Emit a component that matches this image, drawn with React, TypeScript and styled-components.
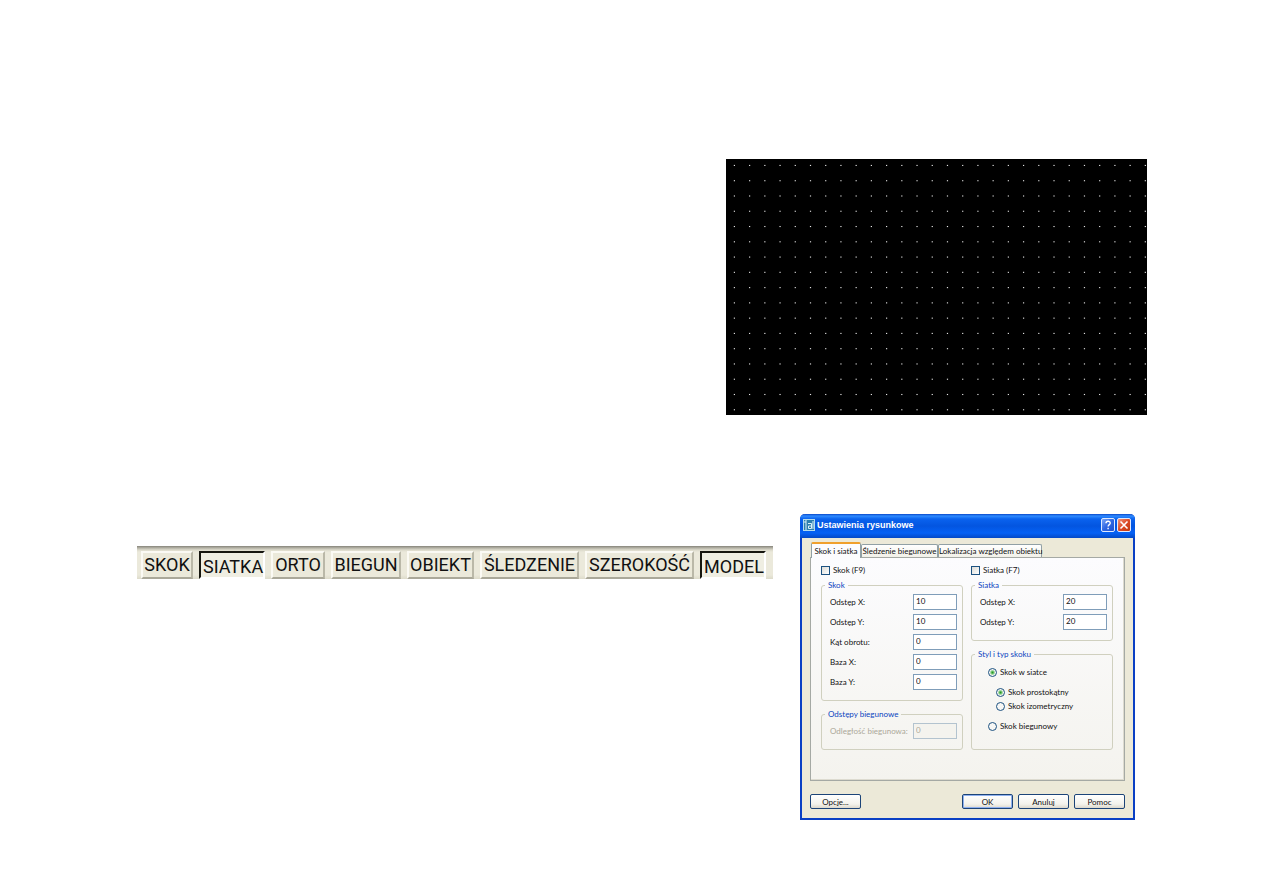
import React from 'react';
import styled, { createGlobalStyle, css } from 'styled-components';

const GlobalStyle = createGlobalStyle`
  *, *::before, *::after { box-sizing: border-box; }
  body { margin: 0; background: #fff; }
  button, input { font: inherit; color: inherit; }
`;

const Page = styled.main`
  display: flex;
  flex-direction: column;
  gap: 99px;
  padding: 159px 116px 73px 137px;
  font-family: Roboto, 'Liberation Sans', Arial, sans-serif;
  color: #111;
`;

const CanvasRow = styled.section`
  display: flex;
  justify-content: flex-end;
`;

const GridCanvas = styled.svg`
  display: block;
  width: 421px;
  height: 256px;
  background: #000;
`;

const ControlsRow = styled.section`
  display: flex;
  align-items: flex-start;
  justify-content: space-between;
  gap: 24px;
  padding-right: 12px;
`;

const StatusBar = styled.div`
  display: flex;
  gap: 6px;
  margin-top: 32px;
  padding: 5px 7px 0 4px;
  background: linear-gradient(#85837a 0, #b5b3a6 2px, #dcdacb 4px, #ebe9db 6px, #ebe9db 29px, #dddbca 33px);
`;

const ModeButton = styled.button<{ $width: number; $pressed?: boolean }>`
  width: ${(p) => p.$width}px;
  height: 28px;
  padding: 0;
  font-size: 18px;
  line-height: 24px;
  text-align: center;
  white-space: nowrap;
  background: #ebe9da;
  border: 2px solid;
  border-color: #fbfaf4 #bab8a8 #aaa899 #fbfaf4;
  ${(p) =>
    p.$pressed &&
    css`
      padding: 2px 0 0 2px;
      background: #efeee2;
      border-color: #16160f #fff #fff #16160f;
    `}
`;

const Dialog = styled.section`
  flex: none;
  width: 335px;
  font-family: Lato, 'Liberation Sans', sans-serif;
  font-size: 8px;
  line-height: 10px;
  background: #ece9d8;
  border: 2px solid #0a3fc4;
  border-top: 0;
  border-radius: 5px 5px 0 0;
`;

const TitleBar = styled.header`
  display: flex;
  align-items: center;
  gap: 2px;
  height: 24px;
  margin: 0 -2px;
  padding: 0 4px 2px 3px;
  border-radius: 5px 5px 0 0;
  color: #fff;
  background: linear-gradient(#0a48c8 0, #2f8bff 2px, #0a62ee 5px, #0355e0 12px, #0561f5 19px, #0449c6 24px);
`;

const Title = styled.h1`
  flex: 1;
  margin: 0;
  font-family: 'Liberation Sans', Arial, sans-serif;
  font-size: 9px;
  line-height: 12px;
  font-weight: bold;
`;

const CaptionButton = styled.button<{ $danger?: boolean }>`
  width: 14px;
  height: 14px;
  padding: 0;
  border: 1px solid #dfe9ff;
  border-radius: 2px;
  background: ${(p) =>
    p.$danger
      ? 'linear-gradient(135deg, #f0957c, #dd4a24 50%, #c0390f)'
      : 'linear-gradient(135deg, #7ba6f8, #2f66e2 50%, #1d50cf)'};

  svg { display: block; }
`;

const DialogBody = styled.form`
  padding: 4px 8px 9px 8px;
`;

const TabList = styled.div`
  display: flex;
  align-items: flex-end;
  padding-left: 1px;
`;

const Tab = styled.button<{ $active?: boolean; $width: number }>`
  width: ${(p) => p.$width}px;
  height: 13px;
  padding: 0;
  white-space: nowrap;
  background: linear-gradient(#fff, #f2f1e9);
  border: 1px solid #91a0a5;
  border-bottom: 0;
  border-radius: 2px 2px 0 0;
  ${(p) =>
    p.$active &&
    css`
      position: relative;
      height: 16px;
      margin-bottom: -1px;
      background: #fcfcfe;
      border-top: 2px solid #f0a02c;
    `}
`;

const TabPanel = styled.div`
  display: grid;
  grid-template-columns: 1fr 1fr;
  gap: 4px 8px;
  padding: 6px 11px 30px 10px;
  background: linear-gradient(#fcfcfe, #f4f3ee);
  border: 1px solid #a5a9a4;
  box-shadow: inset -1px -1px 0 #dddbd0;
`;

const Column = styled.div`
  display: flex;
  flex-direction: column;
  gap: 8px;
`;

const CheckLabel = styled.label`
  display: flex;
  align-items: center;
  gap: 3px;
  height: 12px;
`;

const CheckBox = styled.input`
  appearance: none;
  width: 9px;
  height: 9px;
  margin: 0;
  border: 1px solid #1d5281;
  background: linear-gradient(135deg, #dcdcd7, #fff);
`;

const Group = styled.fieldset<{ $grow?: boolean }>`
  flex: ${(p) => (p.$grow ? '1' : 'none')};
  min-width: 0;
  margin: 0;
  padding: 2px 5px 8px 8px;
  border: 1px solid #d0d0bf;
  border-radius: 3px;
`;

const Legend = styled.legend`
  margin-left: -5px;
  padding: 0 3px;
  color: #0b44c0;
`;

const FieldRow = styled.label<{ $disabled?: boolean }>`
  display: flex;
  align-items: center;
  justify-content: space-between;
  height: 20px;
  white-space: nowrap;
  color: ${(p) => (p.$disabled ? '#aca899' : 'inherit')};
`;

const TextBox = styled.input`
  width: 44px;
  height: 16px;
  padding: 0 2px 2px;
  border: 1px solid #7f9db9;
  border-radius: 0;
  background: #fff;

  &:disabled { color: #aca899; background: #f4f3ee; border-color: #b3c3cf; }
`;

const RadioList = styled.div`
  display: flex;
  flex-direction: column;
  padding: 4px 0 0 8px;
`;

const SubOptions = styled.div`
  padding: 6px 0 6px 8px;
`;

const RadioLabel = styled.label`
  display: flex;
  align-items: center;
  gap: 3px;
  height: 14px;
`;

const Radio = styled.input`
  appearance: none;
  width: 9px;
  height: 9px;
  margin: 0;
  border: 1px solid #1d5281;
  border-radius: 50%;
  background: #f7f7f5;

  &:checked { background: radial-gradient(circle, #2c8a2c 0, #55b855 1px, #f7f7f5 3px); }
`;

const Actions = styled.footer`
  display: flex;
  gap: 5px;
  margin-top: 13px;
`;

const ActionButton = styled.button<{ $primary?: boolean; $first?: boolean }>`
  width: 51px;
  height: 15px;
  padding: 0;
  margin-right: ${(p) => (p.$first ? 'auto' : '0')};
  line-height: 10px;
  border: 1px solid #1c4478;
  border-radius: 2px;
  background: linear-gradient(#fff, #f3f2ec 70%, #dcd8cc);
  box-shadow: ${(p) => (p.$primary ? 'inset 0 0 0 1px #8fb0ee' : 'none')};
`;

const modes = [
  { label: 'SKOK', width: 52 },
  { label: 'SIATKA', width: 66, pressed: true },
  { label: 'ORTO', width: 54 },
  { label: 'BIEGUN', width: 70 },
  { label: 'OBIEKT', width: 67 },
  { label: 'ŚLEDZENIE', width: 99 },
  { label: 'SZEROKOŚĆ', width: 109 },
  { label: 'MODEL', width: 66, pressed: true },
];

const snapFields = [
  ['Odstęp X:', '10'],
  ['Odstęp Y:', '10'],
  ['Kąt obrotu:', '0'],
  ['Baza X:', '0'],
  ['Baza Y:', '0'],
];

const gridFields = [
  ['Odstęp X:', '20'],
  ['Odstęp Y:', '20'],
];

const DotGrid = () => (
  <GridCanvas viewBox="0 0 421 256" role="img" aria-label="Siatka">
    {Array.from({ length: 17 }, (_, row) =>
      Array.from({ length: 28 }, (_, col) => (
        <rect
          key={`${row}-${col}`}
          x={7.8 + col * 15.22}
          y={5.9 + row * 15.27}
          width="1.2"
          height="1.1"
          fill="#e4e4e4"
        />
      )),
    )}
  </GridCanvas>
);

const AppIcon = () => (
  <svg width="12" height="12" viewBox="0 0 12 12" aria-hidden="true">
    <rect width="12" height="12" fill="#b4dcec" />
    <rect x="1" y="1" width="10" height="10" fill="#2c7fae" />
    <path d="M3 1v10M1 3h2M5 4.5h3.5V9.500H5.500V7H8.500M10 2v8" fill="none" stroke="#dcf2fa" />
  </svg>
);

const Field = ({ label, value, disabled }: { label: string; value: string; disabled?: boolean }) => (
  <FieldRow $disabled={disabled}>
    {label}
    <TextBox type="text" defaultValue={value} disabled={disabled} />
  </FieldRow>
);

export default function App() {
  return (
    <>
      <GlobalStyle />
      <Page>
        <CanvasRow>
          <DotGrid />
        </CanvasRow>
        <ControlsRow>
          <StatusBar role="toolbar">
            {modes.map((m) => (
              <ModeButton key={m.label} type="button" $width={m.width} $pressed={m.pressed} aria-pressed={!!m.pressed}>
                {m.label}
              </ModeButton>
            ))}
          </StatusBar>
          <Dialog role="dialog" aria-labelledby="dialog-title">
            <TitleBar>
              <AppIcon />
              <Title id="dialog-title">Ustawienia rysunkowe</Title>
              <CaptionButton type="button" aria-label="Pomoc">
                <svg width="12" height="12" viewBox="0 0 12 12">
                  <path d="M4 4.300C4 1.600 8.300 1.700 8.200 4.200C8.100 5.700 6.100 5.600 6.100 7.600M6.100 8.800v1.500" fill="none" stroke="#fff" strokeWidth="1.4" />
                </svg>
              </CaptionButton>
              <CaptionButton type="button" $danger aria-label="Zamknij">
                <svg width="12" height="12" viewBox="0 0 12 12">
                  <path d="M2.500 2.500l7 7M9.500 2.500l-7 7" stroke="#fff" strokeWidth="1.6" />
                </svg>
              </CaptionButton>
            </TitleBar>
            <DialogBody>
              <TabList role="tablist">
                <Tab type="button" role="tab" aria-selected $active $width={50}>Skok i siatka</Tab>
                <Tab type="button" role="tab" $width={77}>Śledzenie biegunowe</Tab>
                <Tab type="button" role="tab" $width={104}>Lokalizacja względem obiektu</Tab>
              </TabList>
              <TabPanel role="tabpanel">
                <CheckLabel><CheckBox type="checkbox" />Skok (F9)</CheckLabel>
                <CheckLabel><CheckBox type="checkbox" />Siatka (F7)</CheckLabel>
                <Column>
                  <Group>
                    <Legend>Skok</Legend>
                    {snapFields.map(([label, value]) => (
                      <Field key={label} label={label} value={value} />
                    ))}
                  </Group>
                  <Group>
                    <Legend>Odstępy biegunowe</Legend>
                    <Field label="Odległość biegunowa:" value="0" disabled />
                  </Group>
                </Column>
                <Column>
                  <Group>
                    <Legend>Siatka</Legend>
                    {gridFields.map(([label, value]) => (
                      <Field key={label} label={label} value={value} />
                    ))}
                  </Group>
                  <Group $grow>
                    <Legend>Styl i typ skoku</Legend>
                    <RadioList>
                      <RadioLabel><Radio type="radio" name="snap" defaultChecked />Skok w siatce</RadioLabel>
                      <SubOptions>
                        <RadioLabel><Radio type="radio" name="style" defaultChecked />Skok prostokątny</RadioLabel>
                        <RadioLabel><Radio type="radio" name="style" />Skok izometryczny</RadioLabel>
                      </SubOptions>
                      <RadioLabel><Radio type="radio" name="snap" />Skok biegunowy</RadioLabel>
                    </RadioList>
                  </Group>
                </Column>
              </TabPanel>
              <Actions>
                <ActionButton type="button" $first>Opcje...</ActionButton>
                <ActionButton type="button" $primary>OK</ActionButton>
                <ActionButton type="button">Anuluj</ActionButton>
                <ActionButton type="button">Pomoc</ActionButton>
              </Actions>
            </DialogBody>
          </Dialog>
        </ControlsRow>
      </Page>
    </>
  );
}
